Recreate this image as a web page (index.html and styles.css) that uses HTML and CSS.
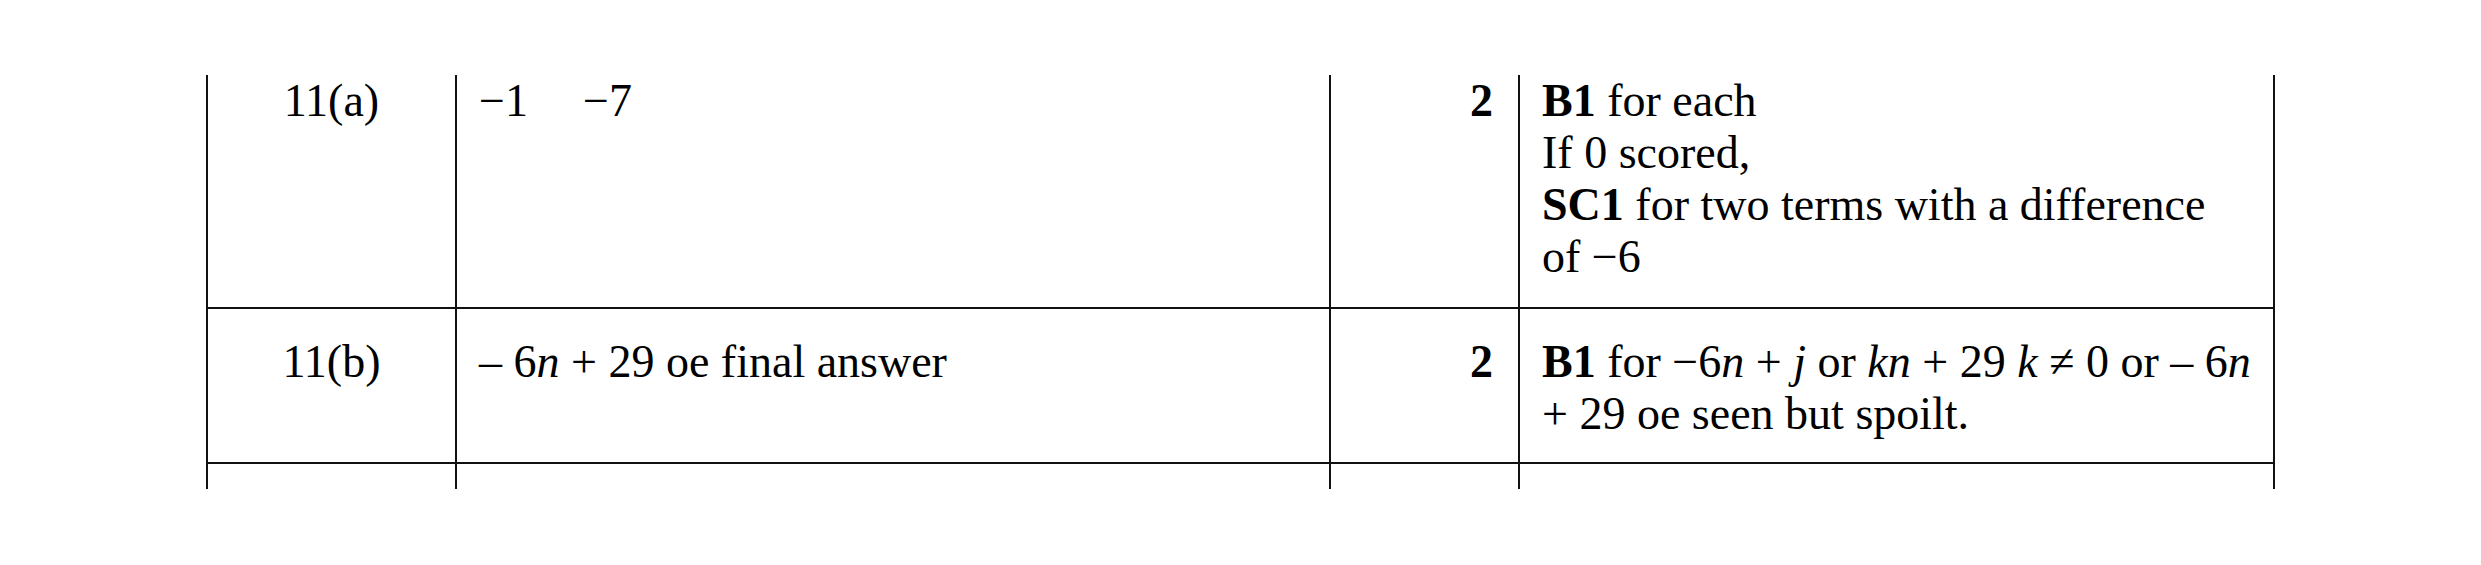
FILE: index.html
```html
<!DOCTYPE html>
<html lang="en">
<head>
<meta charset="utf-8">
<title>Mark scheme</title>
<link rel="stylesheet" href="styles.css">
</head>
<body>
<div class="page">
  <div class="scheme">
    <div class="cell q first">11(a)</div>
    <div class="cell ans first">−1<span class="gap"></span>−7</div>
    <div class="cell marks first"><b>2</b></div>
    <div class="cell guide first"><b>B1</b> for each<br>If 0 scored,<br><b>SC1</b> for two terms with a difference<br>of −6</div>

    <div class="cell q">11(b)</div>
    <div class="cell ans">– 6<i>n</i> + 29 oe final answer</div>
    <div class="cell marks"><b>2</b></div>
    <div class="cell guide"><b>B1</b> for −6<i>n</i> + <i>j</i> or <i>kn</i> + 29 <i>k</i> ≠ 0 or – 6<i>n</i><br>+ 29 oe seen but spoilt.</div>

    <div class="cell last"></div>
    <div class="cell last"></div>
    <div class="cell last"></div>
    <div class="cell last"></div>
  </div>
</div>
</body>
</html>
```

FILE: styles.css
```css
html, body {
  margin: 0;
  padding: 0;
  background: #ffffff;
}

.page {
  padding: 75px 0 0 206px;
  font-family: "Liberation Serif", "Times New Roman", serif;
  font-size: 46px;
  line-height: 52px;
  color: #000000;
}

.scheme {
  display: grid;
  grid-template-columns: 249px 874px 189px 755px;
  grid-template-rows: 234px 155px 25px;
  width: max-content;
  border-left: 2px solid #111111;
}

.cell {
  box-sizing: border-box;
  border-right: 2px solid #111111;
  border-bottom: 2px solid #111111;
  padding-top: 27px;
  white-space: nowrap;
}

.cell.first {
  padding-top: 0;
}

.cell.last {
  border-bottom: none;
  padding-top: 0;
}

.q {
  text-align: center;
}

.ans {
  padding-left: 22px;
}

.gap {
  display: inline-block;
  width: 55px;
}

.marks {
  text-align: right;
  padding-right: 25px;
}

.guide {
  padding-left: 22px;
}

b {
  font-weight: bold;
}

i {
  font-style: italic;
}
```
